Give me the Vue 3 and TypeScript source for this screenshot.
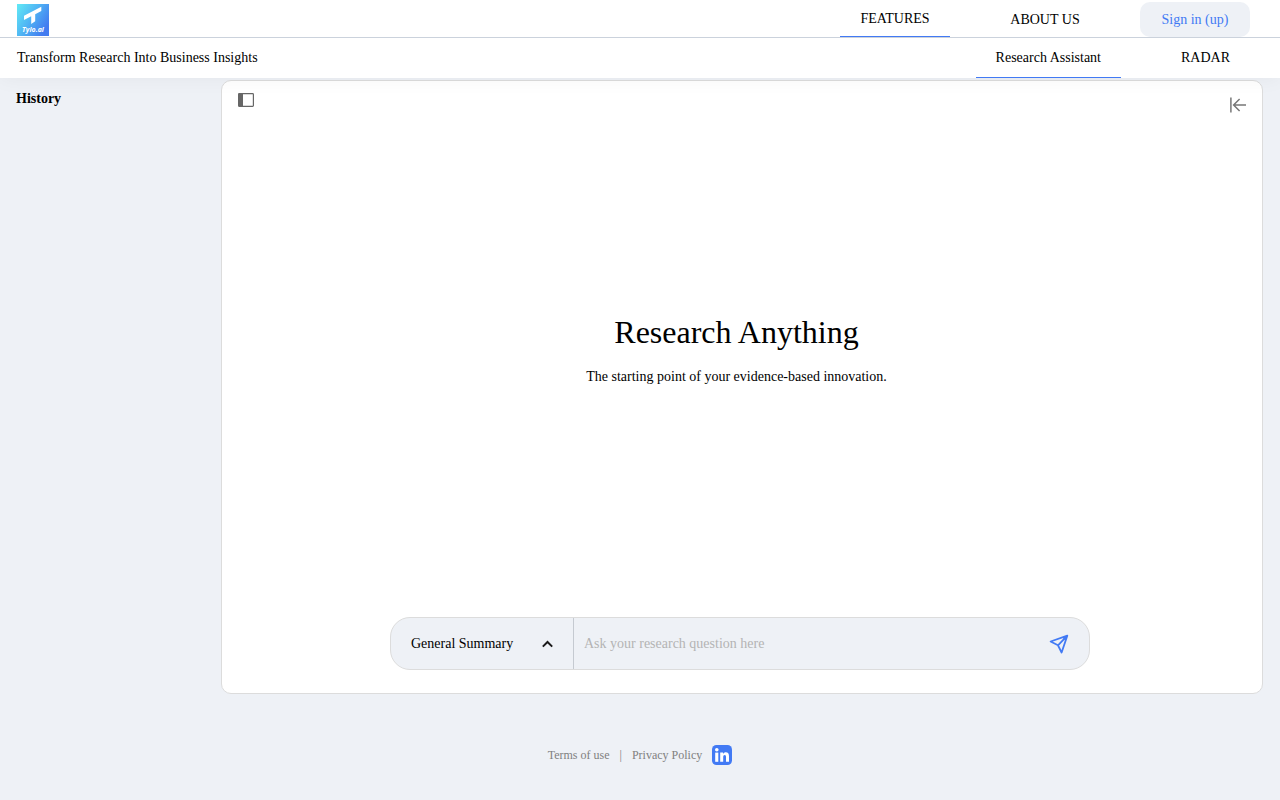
<script setup lang="ts">
import { ref } from 'vue'

const navItems = ['FEATURES', 'ABOUT US']
const subItems = ['Research Assistant', 'RADAR']
const activeNav = ref('FEATURES')
const activeSub = ref('Research Assistant')
const mode = ref('General Summary')
const question = ref('')
</script>

<template>
  <div class="page">
    <header class="header">
      <div class="topbar">
        <a class="logo" href="#" aria-label="Tylo.ai">
          <svg width="32" height="32" viewBox="0 0 32 32">
            <defs>
              <linearGradient id="logoFill" x1="0" y1="0" x2="1" y2="0.6">
                <stop offset="0" stop-color="#62eaf5" />
                <stop offset="0.5" stop-color="#50b6f4" />
                <stop offset="1" stop-color="#427bf0" />
              </linearGradient>
            </defs>
            <rect width="32" height="32" fill="url(#logoFill)" />
            <path d="M7 11.8 24.3 2.8V7L18.2 10.3V17.2L14.2 20V12.2L7 16Z" fill="#fff" />
            <text x="16" y="27.5" text-anchor="middle" class="logo-text">Tylo.ai</text>
          </svg>
        </a>
        <nav class="nav">
          <a v-for="item in navItems" :key="item" href="#" class="nav-item"
            :class="{ active: item === activeNav }" @click.prevent="activeNav = item">{{ item }}</a>
          <button class="sign-in" type="button">Sign in (up)</button>
        </nav>
      </div>
      <div class="subbar">
        <span>Transform Research Into Business Insights</span>
        <nav class="nav">
          <a v-for="item in subItems" :key="item" href="#" class="sub-item"
            :class="{ active: item === activeSub }" @click.prevent="activeSub = item">{{ item }}</a>
        </nav>
      </div>
    </header>

    <div class="body">
      <aside class="sidebar">
        <h2>History</h2>
      </aside>
      <main class="card">
        <div class="tools">
          <button class="icon-btn" type="button" aria-label="Toggle sidebar">
            <svg width="16" height="14" viewBox="0 0 16 14">
              <rect x="0.6" y="0.6" width="14.8" height="12.8" rx="0.8" fill="none" stroke="#666" stroke-width="1.2" />
              <path d="M0.5 0.5H5V13.5H0.5Z" fill="#666" />
            </svg>
          </button>
          <button class="icon-btn collapse" type="button" aria-label="Collapse panel">
            <svg width="16" height="16" viewBox="0 0 16 16" fill="none" stroke="#777" stroke-width="1.5">
              <path d="M0.9 0.5V15.5M16 8H3.6M9.6 2 3.6 8 9.6 14" />
            </svg>
          </button>
        </div>
        <section class="hero">
          <h1>Research Anything</h1>
          <p>The starting point of your evidence-based innovation.</p>
        </section>
        <form class="prompt" @submit.prevent>
          <button class="mode" type="button" aria-haspopup="listbox">
            <span>{{ mode }}</span>
            <svg width="12" height="8" viewBox="0 0 12 8" fill="none" stroke="#1a1a1a" stroke-width="2">
              <path d="M1.8 6.6 6.5 2 11.2 6.6" />
            </svg>
          </button>
          <input v-model="question" type="text" aria-label="Research question" placeholder="Ask your research question here" />
          <button class="icon-btn" type="submit" aria-label="Send">
            <svg width="20" height="20" viewBox="0 0 20 20" fill="none" stroke="#427af4" stroke-width="1.8" stroke-linejoin="round">
              <path d="M18.3 1.7 1.6 7.5 9 11.3 12.6 18.5ZM18.3 1.7 9 11.3" />
              <path d="M18.3 1.7 13.4 3.5 16.4 6.8Z" fill="#427af4" stroke="none" />
            </svg>
          </button>
        </form>
      </main>
    </div>

    <footer class="footer">
      <a href="#">Terms of use</a>
      <span>|</span>
      <a href="#">Privacy Policy</a>
      <a href="#" class="linkedin" aria-label="LinkedIn">
        <svg width="20" height="20" viewBox="0 0 20 20">
          <rect width="20" height="20" rx="4.5" fill="#427af4" />
          <g fill="#fff">
            <circle cx="4.8" cy="4.7" r="1.8" />
            <rect x="3.2" y="7.6" width="3.1" height="9.2" />
            <path d="M8.2 7.6H11.1V8.9C11.7 7.9 12.7 7.3 13.8 7.3C16.1 7.3 17 8.8 17 11.2V16.8H14V11.9C14 10.6 13.6 9.9 12.7 9.9C11.7 9.9 11.2 10.7 11.2 11.9V16.8H8.2Z" />
          </g>
        </svg>
      </a>
    </footer>
  </div>
</template>

<style>
body {
  margin: 0;
}
</style>

<style scoped>
.page {
  display: flex;
  flex-direction: column;
  min-height: 100vh;
  background: #eef1f6;
  color: #000;
  font: 14px/20px "Liberation Serif", "Times New Roman", serif;
}

a {
  color: inherit;
  text-decoration: none;
}

button,
input {
  padding: 0;
  border: 0;
  background: none;
  color: inherit;
  font: inherit;
}

button {
  cursor: pointer;
}

svg {
  display: block;
}

h1,
h2,
p {
  margin: 0;
}

.header {
  position: relative;
  background: #fff;
  box-shadow: 0 0 20px rgba(0, 0, 0, 0.05);
}

.topbar,
.subbar {
  display: flex;
  justify-content: space-between;
  align-items: center;
  padding: 0 30px 0 17px;
}

.topbar {
  height: 37px;
  border-bottom: 1px solid #cbd2dc;
}

.subbar {
  height: 40px;
}

.logo {
  padding-top: 3px;
}

.logo-text {
  fill: #fff;
  font: italic bold 7px "Open Sans", sans-serif;
}

.nav {
  display: flex;
  align-self: stretch;
  align-items: center;
  gap: 40px;
}

.nav-item,
.sub-item {
  display: flex;
  align-items: center;
  justify-content: center;
  align-self: stretch;
  box-sizing: border-box;
}

.nav-item {
  width: 110px;
  padding-top: 2px;
}

.sub-item {
  padding: 0 20px;
}

.active {
  border-bottom: 1px solid #427af4;
}

.sign-in {
  width: 110px;
  height: 35px;
  margin-top: 2px;
  border-radius: 10px;
  background: #eef1f6;
  color: #427af4;
}

.body {
  display: flex;
  flex: 1;
  padding: 2px 17px 0 0;
}

.sidebar {
  flex: 0 0 205px;
  padding: 9px 0 0 16px;
}

.sidebar h2 {
  font-size: 14px;
  line-height: 20px;
}

.card {
  display: flex;
  flex: 1;
  flex-direction: column;
  border: 1px solid #dcdcdc;
  border-radius: 10px;
  background: #fff;
}

.tools {
  display: flex;
  justify-content: space-between;
  align-items: flex-start;
  height: 32px;
  padding: 12px 16px 0;
}

.collapse {
  padding-top: 4px;
}

.hero {
  display: flex;
  flex: 1;
  flex-direction: column;
  align-items: center;
  justify-content: center;
  gap: 15px;
  padding: 0 11px 43px 0;
  text-align: center;
}

.hero h1 {
  font-size: 32px;
  font-weight: 400;
  line-height: 40px;
}

.prompt {
  display: flex;
  align-items: center;
  align-self: center;
  box-sizing: border-box;
  width: 700px;
  max-width: 90%;
  height: 53px;
  margin: 0 4px 23px 0;
  padding-right: 20px;
  border: 1px solid #dcdcdc;
  border-radius: 20px;
  background: #eef1f6;
}

.mode {
  display: flex;
  align-items: center;
  justify-content: space-between;
  align-self: stretch;
  box-sizing: border-box;
  width: 183px;
  padding: 0 20px;
  border-right: 1px solid #c5cad1;
}

.prompt input {
  flex: 1;
  min-width: 0;
  padding: 0 10px;
  outline: none;
}

.prompt input::placeholder {
  color: #b4b4b4;
  opacity: 1;
}

.footer {
  display: flex;
  align-items: center;
  justify-content: center;
  gap: 10px;
  height: 74px;
  padding: 24px 0 8px;
  color: #808080;
  font-size: 12px;
}
</style>
